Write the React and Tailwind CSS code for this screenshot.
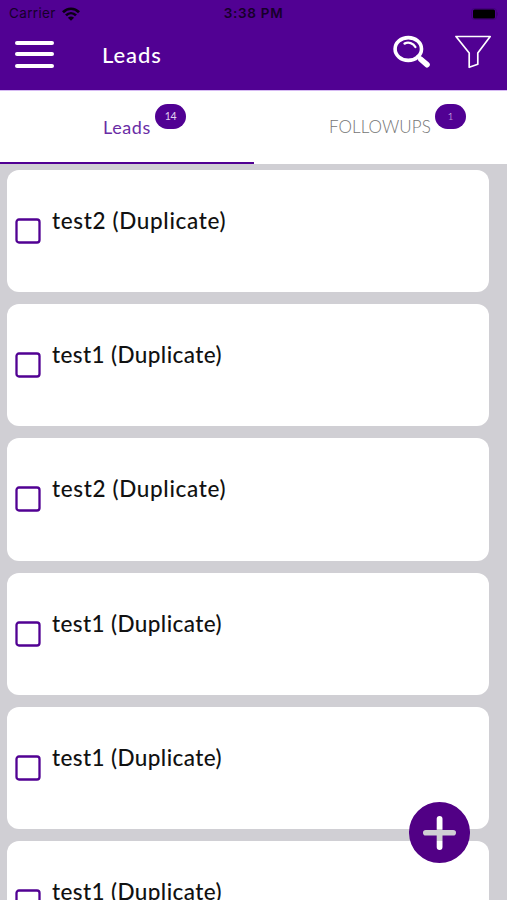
import React from 'react';

const leads = [
  { id: 1, name: 'test2 (Duplicate)' },
  { id: 2, name: 'test1 (Duplicate)' },
  { id: 3, name: 'test2 (Duplicate)' },
  { id: 4, name: 'test1 (Duplicate)' },
  { id: 5, name: 'test1 (Duplicate)' },
  { id: 6, name: 'test1 (Duplicate)' },
];

function StatusBar() {
  return (
    <div className="h-[27px] flex items-center justify-between pl-[9px] pr-[9px] font-['Inter',sans-serif] text-[#16002a] leading-none">
      <div className="w-[120px] flex items-center gap-[6px]">
        <span className="text-[13.5px] tracking-[0.35px]">Carrier</span>
        <svg width="18" height="14" viewBox="0 0 18 14" fill="none" stroke="#0a0012" strokeWidth="2.7">
          <path d="M1 5.2C5.5 0.6 12.5 0.6 17 5.2" />
          <path d="M4 8.4C6.9 5.5 11.1 5.5 14 8.4" />
          <path d="M9 13.8L5.9 10.7C7.7 9 10.3 9 12.1 10.7Z" fill="#0a0012" stroke="none" />
        </svg>
      </div>
      <span className="pt-px text-[13.5px] font-semibold tracking-[0.7px]">3:38 PM</span>
      <div className="w-[120px] flex justify-end">
        <svg width="27" height="12" viewBox="0 0 27 12">
          <rect x="0.5" y="0.5" width="25" height="11" rx="3" fill="none" stroke="#43007c" />
          <rect x="2" y="1.5" width="22" height="9" rx="1.5" fill="#000" />
          <path d="M26 4v4c1.2-.6 1.2-3.4 0-4z" fill="#43007c" />
        </svg>
      </div>
    </div>
  );
}

function Header() {
  return (
    <header className="h-[90px] shrink-0 bg-[#510193]">
      <StatusBar />
      <div className="h-[54px] flex items-center pl-[15px] pr-[15px] text-white">
        <div className="w-[39px] flex flex-col gap-[7.5px]">
          <span className="h-1 rounded-full bg-white" />
          <span className="h-1 rounded-full bg-white" />
          <span className="h-1 rounded-full bg-white" />
        </div>
        <h1 className="ml-[48px] pt-[2px] flex-1 text-[22px] leading-none font-medium tracking-[0.9px]">Leads</h1>
        <svg className="mb-[4px]" width="38" height="34" viewBox="0 0 38 34" fill="none" stroke="currentColor" strokeLinecap="round">
          <ellipse cx="15.3" cy="14" rx="13.2" ry="11.4" strokeWidth="3.6" />
          <path d="M11.5 8.6C15.5 6.6 20.4 8.2 22.4 12" strokeWidth="2.3" />
          <path d="M25 21.5L29 25" strokeWidth="4" />
          <path d="M28 24.5L34 29.7" strokeWidth="5.6" />
        </svg>
        <svg className="ml-6 mb-[4px]" width="37" height="34" viewBox="0 0 37 34" fill="none" stroke="currentColor" strokeWidth="1.7" strokeLinejoin="round">
          <path d="M1 1.5H35.2L22.8 18V29.3L14.2 32.3V18Z" />
        </svg>
      </div>
    </header>
  );
}

function Tab({ label, count, active, className }) {
  return (
    <button
      className={`w-1/2 h-[72.5px] flex items-start pt-[13px] border-b-2 ${
        active ? 'border-[#510193] text-[#6a2ca5]' : 'border-transparent text-[#757575]'
      } ${className}`}
    >
      <span className="mt-[13px] leading-[20px] whitespace-nowrap">{label}</span>
      <span className="ml-1 w-[31px] h-[25px] rounded-[12.5px] bg-[#510193] text-[10.5px] leading-[25px] text-[#e3d3f0] text-center tracking-[-0.4px]">
        {count}
      </span>
    </button>
  );
}

function LeadCard({ name }) {
  const tracking = name.startsWith('test1') ? 'tracking-[0.4px]' : 'tracking-[0.65px]';

  return (
    <div className="h-[122.4px] shrink-0 rounded-[12px] bg-white flex pl-2">
      <svg className="mt-[48px] shrink-0" width="26" height="26" viewBox="0 0 26 26">
        <rect x="1.5" y="1.5" width="23" height="23" rx="2.5" fill="none" stroke="#510193" strokeWidth="2.3" />
      </svg>
      <span className={`ml-[11px] mt-[37px] text-[22.5px] leading-[28px] font-medium text-[#111] whitespace-nowrap ${tracking}`}>
        {name}
      </span>
    </div>
  );
}

export default function App() {
  return (
    <div className="relative w-[507px] h-[900px] overflow-hidden flex flex-col bg-[#d0cfd4] font-['Lato',sans-serif]">
      <Header />
      <nav className="flex shrink-0 bg-white border-t border-[#d6baf3]">
        <Tab label="Leads" count={14} active className="pl-[103px] text-[18px] tracking-[0.6px]" />
        <Tab label="FOLLOWUPS" count={1} className="pl-[75.5px] text-[17px] font-light tracking-[0.05px]" />
      </nav>
      <main className="flex-1 min-h-0 flex flex-col gap-3 pt-[6px] pl-[7px] pr-[18px]">
        {leads.map((lead) => (
          <LeadCard key={lead.id} name={lead.name} />
        ))}
      </main>

      {/* Add button, the plus is cut out so the list shows through */}
      <button className="absolute left-[409px] top-[802px]">
        <svg width="61" height="61" viewBox="0 0 61 61">
          <path
            fillRule="evenodd"
            fill="#510085"
            d="M30.5 0a30.5 30.5 0 1 1 0 61a30.5 30.5 0 1 1 0-61zM27.7 16.8V28H16.8a2.8 2.8 0 0 0 0 5.6H27.7V45a2.9 2.9 0 0 0 5.8 0V33.6H44.2a2.8 2.8 0 0 0 0-5.6H33.5V16.8a2.9 2.9 0 0 0-5.8 0z"
          />
        </svg>
      </button>
    </div>
  );
}
